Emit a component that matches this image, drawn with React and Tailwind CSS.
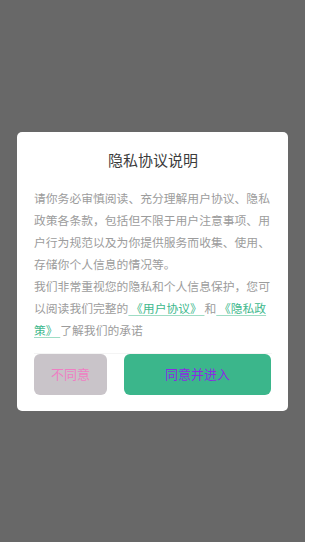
export default function App() {
  const font = { fontFamily: '"Noto Sans CJK SC", "Noto Sans", sans-serif' };
  return (
    <div
      className="w-[305px] h-[542px] bg-[#686868] flex items-center justify-center"
      style={font}
    >
      <div className="w-[271px] bg-white rounded-[5px] pt-[17px] pb-[16px] pl-[17px] pr-[16px] flex flex-col">
        <div className="text-[15px] leading-[22px] text-[#3c3c3c] text-center">隐私协议说明</div>
        <div className="mt-[16px] text-[11.8px] leading-[22px] text-[#9c9c9c]">
          <p>请你务必审慎阅读、充分理解用户协议、隐私政策各条款，包括但不限于用户注意事项、用户行为规范以及为你提供服务而收集、使用、存储你个人信息的情况等。</p>
          <p>
            我们非常重视您的隐私和个人信息保护，您可以阅读我们完整的<span className="text-[#3db88c] underline decoration-[#9edcc4] underline-offset-2">&nbsp;《用户协议》&nbsp;</span>和<span className="text-[#3db88c] underline decoration-[#9edcc4] underline-offset-2">&nbsp;《隐私政策》&nbsp;</span>了解我们的承诺
          </p>
        </div>
        <div className="mt-[12px] flex gap-[17px] border-t border-[#f4f4f4]">
          <button className="w-[73px] h-[41px] rounded-[6px] bg-[#c9c4c9] text-[13px] text-[#ee7fc3]" style={font}>不同意</button>
          <button className="w-[147px] h-[41px] rounded-[6px] bg-[#3bb68b] text-[13px] text-[#8a2be2]" style={font}>同意并进入</button>
        </div>
      </div>
    </div>
  );
}
